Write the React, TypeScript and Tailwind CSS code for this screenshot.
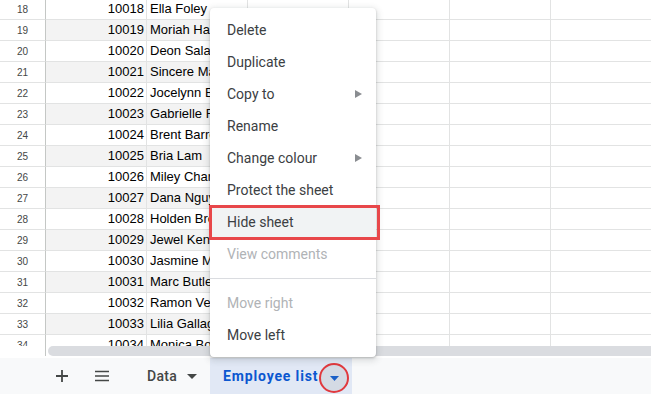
import React from "react";

const names: [number, string][] = [
  [18, "Ella Foley"],
  [19, "Moriah Hall"],
  [20, "Deon Salazar"],
  [21, "Sincere Mack"],
  [22, "Jocelynn Bell"],
  [23, "Gabrielle Fox"],
  [24, "Brent Barrera"],
  [25, "Bria Lam"],
  [26, "Miley Chandler"],
  [27, "Dana Nguyen"],
  [28, "Holden Brown"],
  [29, "Jewel Kent"],
  [30, "Jasmine Miller"],
  [31, "Marc Butler"],
  [32, "Ramon Vega"],
  [33, "Lilia Gallagher"],
  [34, "Monica Bowers"],
];

function Row({ n, name }: { n: number; name: string }) {
  const band = n % 2 === 1 ? "bg-[#f3f3f3]" : "bg-white";
  return (
    <div className="flex h-[21px] shrink-0">
      <div className="w-[46px] shrink-0 border-r border-b border-r-[#c4c7c5] border-b-[#e2e3e3] bg-white flex items-center justify-center text-[10px] text-[#444746]">
        {n}
      </div>
      <div className={`w-[101px] shrink-0 border-r border-b border-[#e2e3e3] ${band} flex items-center justify-end pr-[2px] text-[13px] text-black overflow-hidden`}>
        {10000 + n}
      </div>
      <div className={`w-[101px] shrink-0 border-r border-b border-[#e2e3e3] ${band} flex items-center pl-[3px] text-[13px] text-black overflow-hidden whitespace-nowrap`}>
        {name}
      </div>
      <div className="w-[101px] shrink-0 border-r border-b border-[#e2e3e3] bg-white" />
      <div className="w-[101px] shrink-0 border-r border-b border-[#e2e3e3] bg-white" />
      <div className="w-[101px] shrink-0 border-r border-b border-[#e2e3e3] bg-white" />
      <div className="flex-1 border-b border-[#e2e3e3] bg-white" />
    </div>
  );
}

function Arrow() {
  return (
    <svg width="7" height="8" viewBox="0 0 7 8" className="shrink-0">
      <path d="M0 0 L7 4 L0 8 Z" fill="#8a8d91" />
    </svg>
  );
}

function Item({
  label,
  disabled,
  sub,
  active,
}: {
  label: string;
  disabled?: boolean;
  sub?: boolean;
  active?: boolean;
}) {
  return (
    <div
      className={`h-[32px] flex items-center justify-between pl-[17px] pr-[14px] text-[14px] ${
        disabled ? "text-[#b0b3b6]" : "text-[#3c4043]"
      } ${active ? "bg-[#f1f3f4]" : ""}`}
    >
      <span>{label}</span>
      {sub && <Arrow />}
    </div>
  );
}

export default function App() {
  return (
    <div className="relative w-[651px] h-[394px] overflow-hidden bg-white font-['Liberation_Sans',Arial,sans-serif]">
      {/* grid */}
      <div className="h-[346px] overflow-hidden">
        <div className="-mt-[1px] flex flex-col">
          {names.map(([n, name]) => (
            <Row key={n} n={n} name={name} />
          ))}
        </div>
      </div>
      {/* scrollbar */}
      <div className="flex h-[10px]">
        <div className="w-[46px] shrink-0 border-r border-[#c4c7c5] bg-white" />
        <div className="w-[2px] shrink-0 bg-white" />
        <div className="flex-1 bg-[#dadce0] rounded-l-[5px]" />
      </div>
      <div className="h-[2px] bg-white" />
      {/* bottom bar */}
      <div className="flex h-[36px] bg-[#f8f9fa] font-['Roboto',sans-serif]">
        <div className="w-[46px] shrink-0" />
        <div className="w-[32px] shrink-0 flex items-center justify-center">
          <svg width="14" height="14" viewBox="0 0 14 14">
            <path d="M7 1 V13 M1 7 H13" stroke="#444746" strokeWidth="1.8" />
          </svg>
        </div>
        <div className="w-[48px] shrink-0 flex items-center justify-center">
          <svg width="16" height="12" viewBox="0 0 16 12">
            <path d="M1 1.5 H15 M1 6 H15 M1 10.5 H15" stroke="#444746" strokeWidth="1.6" />
          </svg>
        </div>
        <div className="w-[84px] shrink-0 flex items-center pl-[21px] text-[14px] font-medium tracking-[0.3px] text-[#444746]">
          <span>Data</span>
          <svg width="10" height="5" viewBox="0 0 10 5" className="ml-[10px]">
            <path d="M0 0 L10 0 L5 5 Z" fill="#444746" />
          </svg>
        </div>
        <div className="w-[142px] shrink-0 flex items-center pl-[13px] bg-[#e1e8f5] text-[14px] font-bold tracking-[0.85px] text-[#0b57d0]">
          <span className="whitespace-nowrap">Employee list</span>
        </div>
      </div>
      {/* tab dropdown with red circle */}
      <div className="absolute left-[319px] top-[363px] w-[30px] h-[30px] rounded-full border-[2.5px] border-[#e0393e] bg-[#d4dae4] flex items-center justify-center">
        <svg width="9" height="5" viewBox="0 0 9 5">
          <path d="M0 0 L9 0 L4.5 5 Z" fill="#1a5fc7" />
        </svg>
      </div>
      {/* menu */}
      <div className="absolute left-[210px] top-[8px] w-[166px] bg-white rounded-[4px] py-[6px] shadow-[0_2px_6px_2px_rgba(60,64,67,0.15),0_1px_2px_rgba(60,64,67,0.3)] font-['Roboto',sans-serif]">
        <Item label="Delete" />
        <Item label="Duplicate" />
        <Item label="Copy to" sub />
        <Item label="Rename" />
        <Item label="Change colour" sub />
        <Item label="Protect the sheet" />
        <Item label="Hide sheet" active />
        <Item label="View comments" disabled />
        <div className="my-[8px] h-px bg-[#dadce0]" />
        <Item label="Move right" disabled />
        <Item label="Move left" />
      </div>
      {/* red highlight box */}
      <div className="absolute left-[209px] top-[205px] w-[171px] h-[35px] border-[3px] border-[#e8474a]" />
    </div>
  );
}
